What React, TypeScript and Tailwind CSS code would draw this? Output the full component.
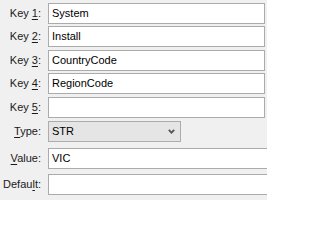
import React from 'react'

interface FieldRowProps {
  label: React.ReactNode
  value?: string
  wide?: boolean
  className?: string
}

const FieldRow: React.FC<FieldRowProps> = ({ label, value, wide, className }) => (
  <div className={`flex items-center ${className ?? ''}`}>
    <div className="w-[41px] shrink-0 text-right text-[#1a1a1a]">{label}</div>
    <div
      className={`ml-[7px] h-[21px] shrink-0 border border-[#ababab] bg-white pl-[3px] leading-[19px] text-black ${
        wide ? 'w-[240px]' : 'w-[217px]'
      }`}
    >
      {value}
    </div>
  </div>
)

const U: React.FC<{ children: React.ReactNode }> = ({ children }) => (
  <span className="underline underline-offset-[2px]">{children}</span>
)

export default function App() {
  return (
    <div
      className="h-[200px] w-[267px] overflow-hidden bg-[#f0f0f0] text-[11px]"
      style={{ fontFamily: '"Liberation Sans", Arial, sans-serif' }}
    >
      <div className="flex flex-col pt-[3px]">
        <FieldRow label={<>Key <U>1</U>:</>} value="System" />
        <FieldRow className="mt-[2px]" label={<>Key <U>2</U>:</>} value="Install" />
        <FieldRow className="mt-[3px]" label={<>Key <U>3</U>:</>} value="CountryCode" />
        <FieldRow className="mt-[2px]" label={<>Key <U>4</U>:</>} value="RegionCode" />
        <FieldRow className="mt-[3px]" label={<>Key <U>5</U>:</>} value="" />

        {/* type dropdown */}
        <div className="mt-[3px] flex items-center">
          <div className="w-[41px] shrink-0 text-right text-[#1a1a1a]">
            <U>T</U>ype:
          </div>
          <div className="ml-[7px] flex h-[21px] w-[133px] shrink-0 items-center justify-between border border-[#acacac] bg-[#e5e5e5] pl-[3px] pr-[5px] text-black">
            <span>STR</span>
            <svg width="7" height="5" viewBox="0 0 7 5" className="text-[#555]">
              <path d="M0.8 0.8 L3.5 3.6 L6.2 0.8" fill="none" stroke="currentColor" strokeWidth="1.8" />
            </svg>
          </div>
        </div>

        <FieldRow className="mt-[6px]" label={<><U>V</U>alue:</>} value="VIC" wide />
        <FieldRow className="mt-[5px]" label={<>Defau<U>l</U>t:</>} value="" wide />
      </div>
    </div>
  )
}
